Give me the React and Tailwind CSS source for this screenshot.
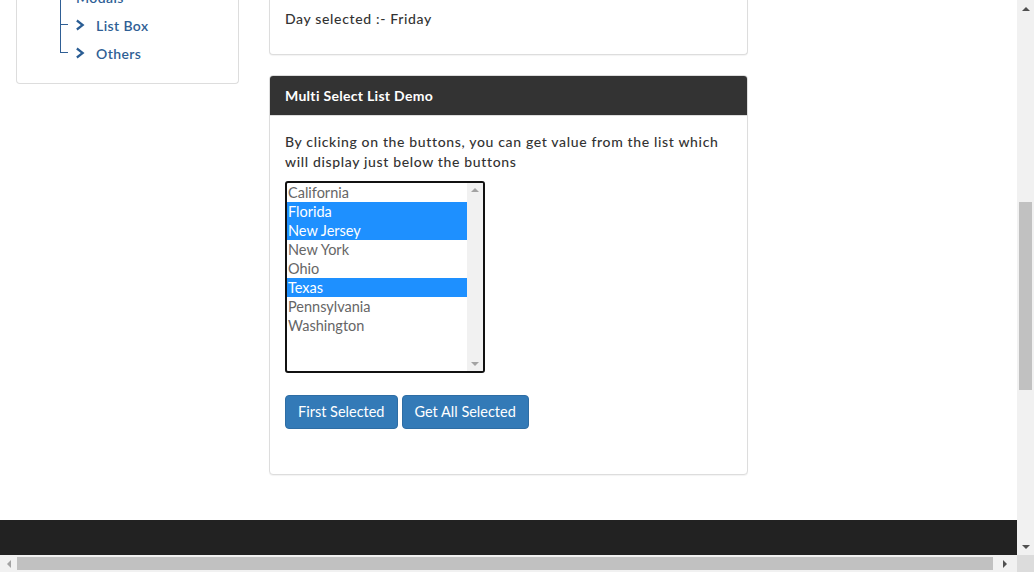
import React from "react";

const states = [
  { name: "California", selected: false },
  { name: "Florida", selected: true },
  { name: "New Jersey", selected: true },
  { name: "New York", selected: false },
  { name: "Ohio", selected: false },
  { name: "Texas", selected: true },
  { name: "Pennsylvania", selected: false },
  { name: "Washington", selected: false },
];

const treeItems = [
  { label: "Modals", chevron: false },
  { label: "List Box", chevron: true },
  { label: "Others", chevron: true, last: true },
];

const Arrow = ({ dir, className }) => {
  const shapes = {
    up: "border-l-[4px] border-r-[4px] border-b-[4px] border-l-transparent border-r-transparent",
    down: "border-l-[4px] border-r-[4px] border-t-[4px] border-l-transparent border-r-transparent",
    left: "border-t-[4px] border-b-[4px] border-r-[4px] border-t-transparent border-b-transparent",
    right: "border-t-[4px] border-b-[4px] border-l-[4px] border-t-transparent border-b-transparent",
  };
  return <span className={`block w-0 h-0 ${shapes[dir]} ${className}`} />;
};

const Chevron = () => (
  <svg viewBox="0 0 10 12" className="w-[10px] h-[12px] mr-[10px] shrink-0" fill="#2a5d94">
    <path d="M1.5 0.5 L8.5 6 L1.5 11.5 L0.2 9.6 L4.8 6 L0.2 2.4 Z" />
  </svg>
);

const Sidebar = () => (
  <div className="w-[223px] shrink-0 self-start border border-t-0 border-[#dddddd] rounded-b-[4px] bg-white pb-[16px]">
    <ul className="-mt-[17px] pl-[43px]">
      {treeItems.map((item) => (
        <li key={item.label} className="relative h-[28px] flex items-center pl-[16px]">
          <span
            className={`absolute left-0 top-0 w-px bg-[#2f5f95] ${item.last ? "h-[14px]" : "h-full"}`}
          />
          {item.chevron && (
            <>
              <span className="absolute left-0 top-[13px] w-[8px] h-px bg-[#2f5f95]" />
              <Chevron />
            </>
          )}
          <span className="text-[14px] font-semibold tracking-[0.4px] text-[#2f5f95]">{item.label}</span>
        </li>
      ))}
    </ul>
  </div>
);

const ListBox = () => (
  <div className="w-[200px] h-[192px] border-2 border-[#111111] rounded-[3px] flex bg-white overflow-hidden">
    <div className="flex-1">
      {states.map((s) => (
        <div
          key={s.name}
          className={`h-[19px] leading-[19px] pl-[1px] text-[14.5px] ${
            s.selected ? "bg-[#1e90ff] text-white" : "text-[#666666]"
          }`}
        >
          {s.name}
        </div>
      ))}
    </div>
    <div className="w-[16px] bg-[#f1f1f1] flex flex-col justify-between items-center py-[5px]">
      <Arrow dir="up" className="border-b-[#a3a3a3]" />
      <Arrow dir="down" className="border-t-[#a3a3a3]" />
    </div>
  </div>
);

const MainColumn = () => (
  <div className="w-[479px] shrink-0">
    <div className="border border-t-0 border-[#dddddd] rounded-b-[4px] bg-white shadow-[0_1px_1px_rgba(0,0,0,0.05)] px-[15px] pt-[9px] pb-[25px]">
      <p className="text-[14px] leading-[20px] font-medium tracking-[0.65px] text-[#333333]">
        Day selected :- Friday
      </p>
    </div>

    <div className="mt-[20px] border border-[#dddddd] rounded-[4px] bg-white shadow-[0_1px_1px_rgba(0,0,0,0.05)] overflow-hidden">
      <div className="h-[40px] bg-[#333333] border-b border-[#dddddd] px-[15px] flex items-center">
        <h3 className="text-[14px] font-bold tracking-[0.3px] text-white">Multi Select List Demo</h3>
      </div>
      <div className="px-[15px] pt-[16px] pb-[45px]">
        <p className="text-[14px] leading-[20px] font-medium tracking-[0.65px] text-[#333333]">
          By clicking on the buttons, you can get value from the list which will display just below the buttons
        </p>
        <div className="mt-[9px]">
          <ListBox />
        </div>
        <div className="mt-[22px] flex gap-[4px]">
          <button className="h-[34px] px-[12px] rounded-[4px] bg-[#337ab7] border border-[#2e6da4] text-white text-[14.5px]">
            First Selected
          </button>
          <button className="h-[34px] px-[12px] rounded-[4px] bg-[#337ab7] border border-[#2e6da4] text-white text-[14.5px]">
            Get All Selected
          </button>
        </div>
      </div>
    </div>
  </div>
);

export default function App() {
  return (
    <div className="w-[1034px] h-[572px] flex flex-col overflow-hidden bg-white font-['Lato','Liberation_Sans',sans-serif]">
      <div className="flex flex-1 min-h-0">
        <div className="flex-1 flex flex-col">
          <div className="flex-1 flex pl-[16px] gap-[30px]">
            <Sidebar />
            <MainColumn />
          </div>
          <footer className="h-[35px] bg-[#222222]" />
        </div>
        {/* vertical scrollbar */}
        <div className="w-[17px] bg-[#f1f1f1] flex flex-col items-center">
          <div className="h-[17px] flex items-center justify-center">
            <Arrow dir="up" className="border-b-[#505050]" />
          </div>
          <div className="h-[185px]" />
          <div className="w-[13px] h-[188px] bg-[#c1c1c1]" />
          <div className="flex-1" />
          <div className="h-[17px] flex items-center justify-center">
            <Arrow dir="down" className="border-t-[#505050]" />
          </div>
        </div>
      </div>
      {/* horizontal scrollbar */}
      <div className="h-[17px] flex">
        <div className="flex-1 bg-[#f1f1f1] flex items-center">
          <div className="w-[17px] flex justify-center">
            <Arrow dir="left" className="border-r-[#a3a3a3]" />
          </div>
          <div className="w-[976px] h-[13px] bg-[#c1c1c1]" />
          <div className="flex-1 flex justify-center">
            <Arrow dir="right" className="border-l-[#505050]" />
          </div>
        </div>
        <div className="w-[17px] bg-[#dcdcdc]" />
      </div>
    </div>
  );
}
